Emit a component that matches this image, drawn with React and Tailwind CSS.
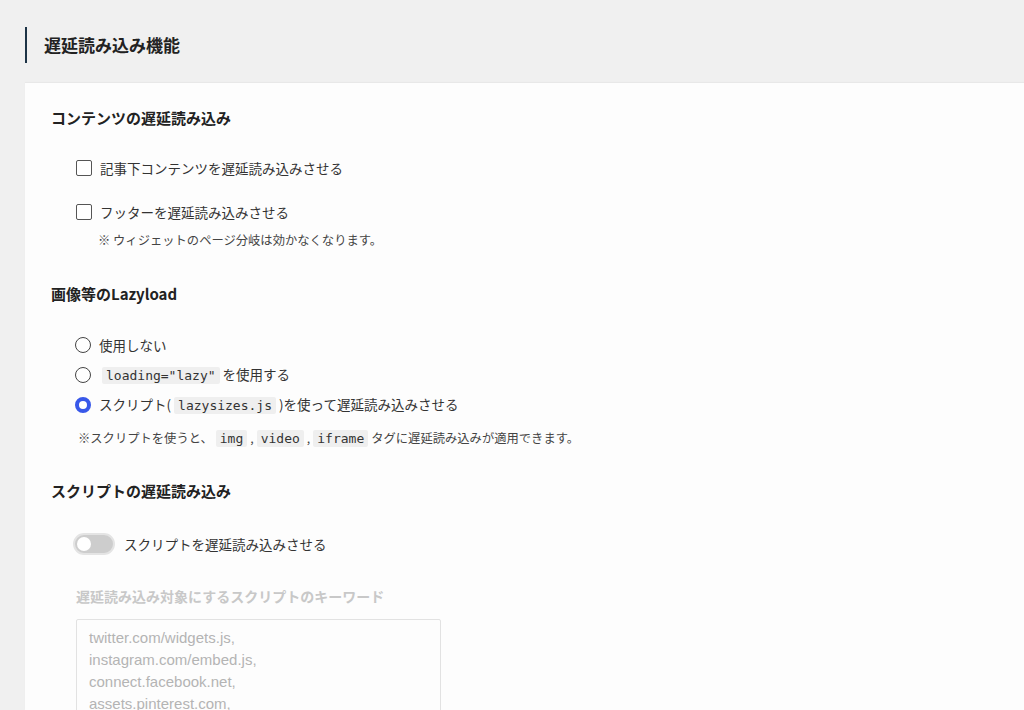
import { useState } from 'react'

const jp = { fontFamily: '"Noto Sans CJK JP", "Noto Sans", sans-serif' }

function Code({ children }) {
  return (
    <code className="mx-[3px] rounded-[2px] bg-[#efefef] px-[4px] py-[1px] text-[13px] text-[#333]" style={{ fontFamily: '"DejaVu Sans Mono", monospace' }}>
      {children}
    </code>
  )
}

function Checkbox({ label }) {
  const [on, setOn] = useState(false)
  return (
    <label className="flex items-center gap-[8px] text-[13.5px] text-[#333]">
      <span
        onClick={() => setOn(!on)}
        className="box-border h-[16px] w-[16px] rounded-[2px] border-[1.5px] border-[#555] bg-white"
      />
      {label}
    </label>
  )
}

function Radio({ checked, children }) {
  return (
    <label className="flex h-[22px] items-center gap-[8px] text-[13.5px] text-[#333]">
      {checked ? (
        <span className="box-border h-[16px] w-[16px] rounded-full border-[4.5px] border-[#3858e9] bg-white" />
      ) : (
        <span className="box-border h-[16px] w-[16px] rounded-full border-[1.5px] border-[#444] bg-white" />
      )}
      <span>{children}</span>
    </label>
  )
}

export default function App() {
  return (
    <div className="min-h-[710px] bg-[#f0f0f0] pl-[25px]" style={jp}>
      <div className="pt-[27px] pb-[20px]">
        <h2 className="flex h-[36px] items-center border-l-2 border-[#1d3346] pl-[17px] text-[17px] font-bold text-[#222]">
          遅延読み込み機能
        </h2>
      </div>

      <div className="h-[627px] overflow-hidden bg-[#fdfdfd] pl-[26px] pt-[24px] shadow-[0_-1px_1px_rgba(0,0,0,0.03)]">
        <h3 className="text-[15px] font-bold leading-[22px] text-[#222]">コンテンツの遅延読み込み</h3>
        <div className="mt-[29px] pl-[25px]">
          <Checkbox label="記事下コンテンツを遅延読み込みさせる" />
          <div className="mt-[24px]">
            <Checkbox label="フッターを遅延読み込みさせる" />
          </div>
          <p className="mt-[8px] pl-[22px] text-[12.3px] text-[#444]">※ ウィジェットのページ分岐は効かなくなります。</p>
        </div>

        <h3 className="mt-[34px] text-[15px] font-bold leading-[22px] text-[#222]">画像等のLazyload</h3>
        <div className="mt-[29px] flex flex-col gap-[8px] pl-[24px]">
          <Radio>使用しない</Radio>
          <Radio>
            <Code>loading="lazy"</Code>を使用する
          </Radio>
          <Radio checked>
            スクリプト(<Code>lazysizes.js</Code>)を使って遅延読み込みさせる
          </Radio>
        </div>
        <p className="mt-[13px] pl-[27px] text-[12.3px] text-[#444]">
          ※スクリプトを使うと、<Code>img</Code>,<Code>video</Code>,<Code>iframe</Code>タグに遅延読み込みが適用できます。
        </p>

        <h3 className="mt-[32px] text-[15px] font-bold leading-[22px] text-[#222]">スクリプトの遅延読み込み</h3>
        <div className="mt-[31px] flex items-center gap-[9px] pl-[22px]">
          <span className="box-border flex h-[22px] w-[42px] items-center rounded-full border-2 border-[#e4e4e4] bg-[#cdcdcd] pl-[2px]">
            <span className="h-[14px] w-[14px] rounded-full bg-white" />
          </span>
          <span className="text-[13.5px] text-[#333]">スクリプトを遅延読み込みさせる</span>
        </div>

        <div className="mt-[31px] pl-[25px]">
          <p className="text-[14px] font-bold text-[#c8c8c8]">遅延読み込み対象にするスクリプトのキーワード</p>
          <div
            className="mt-[12px] h-[120px] w-[365px] rounded-[2px] border border-[#e2e2e2] bg-[#fdfdfd] px-[12px] pt-[7px] text-[15px] leading-[22px] text-[#b4b4b4]"
            style={{ fontFamily: '"Liberation Sans", Arial, sans-serif' }}
          >
            <div>twitter.com/widgets.js,</div>
            <div>instagram.com/embed.js,</div>
            <div>connect.facebook.net,</div>
            <div>assets.pinterest.com,</div>
          </div>
        </div>
      </div>
    </div>
  )
}
